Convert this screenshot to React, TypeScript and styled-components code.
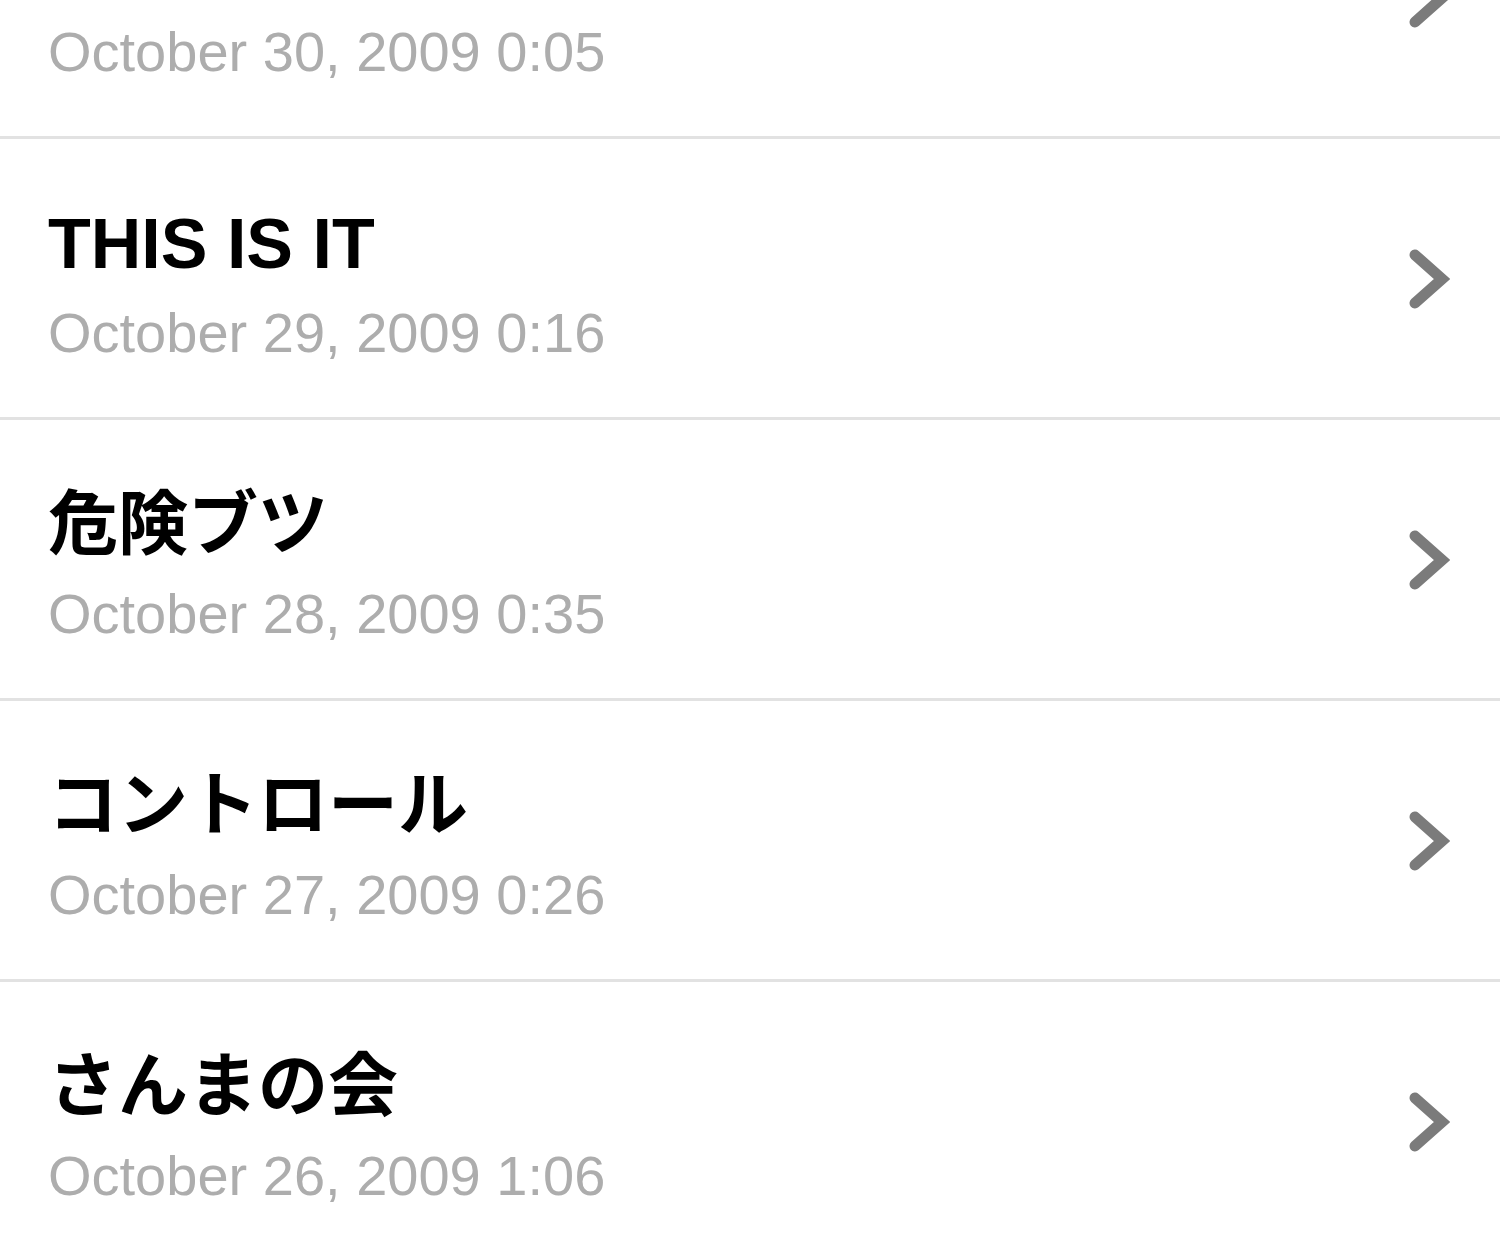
import React from "react";
import styled, { createGlobalStyle } from "styled-components";

const GlobalStyle = createGlobalStyle`
  html, body {
    margin: 0;
    padding: 0;
    background: #ffffff;
  }
  body {
    font-family: "Liberation Sans", Arial, "Noto Sans CJK JP", sans-serif;
  }
`;

const Screen = styled.div`
  width: 1500px;
  height: 1250px;
  overflow: hidden;
  background: #ffffff;
`;

const List = styled.ul`
  list-style: none;
  margin: -142px 0 0 0;
  padding: 0;
`;

const Row = styled.li`
  height: 278px;
  box-sizing: content-box;
  border-bottom: 3px solid #e2e2e2;
  display: flex;
  align-items: flex-start;
  justify-content: space-between;
  padding: 0 50px 0 48px;
`;

const TextBlock = styled.div`
  display: flex;
  flex-direction: column;
  padding-top: 62px;
`;

const Title = styled.div`
  font-family: "Liberation Sans", Arial, "Noto Sans CJK JP", sans-serif;
  font-weight: 700;
  font-size: 70px;
  line-height: 86px;
  color: #000000;
  white-space: nowrap;
`;

const DateText = styled.div`
  font-family: "Liberation Sans", Arial, sans-serif;
  font-weight: 400;
  font-size: 56px;
  line-height: 92px;
  color: #adadad;
  white-space: nowrap;
`;

const ChevronWrap = styled.div`
  align-self: center;
  display: flex;
  width: 44px;
  height: 66px;
`;

const Chevron = () => (
  <ChevronWrap>
    <svg width="44" height="66" viewBox="0 0 44 66">
      <path
        d="M9 10 L36 34 L9 58"
        fill="none"
        stroke="#7b7b7b"
        strokeWidth="11"
        strokeLinecap="round"
        strokeLinejoin="miter"
      />
    </svg>
  </ChevronWrap>
);

const items = [
  { title: "", date: "October 30, 2009 0:05" },
  { title: "THIS IS IT", date: "October 29, 2009 0:16" },
  { title: "危険ブツ", date: "October 28, 2009 0:35" },
  { title: "コントロール", date: "October 27, 2009 0:26" },
  { title: "さんまの会", date: "October 26, 2009 1:06" },
];

export default function App() {
  return (
    <>
      <GlobalStyle />
      <Screen>
        <List>
          {items.map((it) => (
            <Row key={it.date}>
              <TextBlock>
                <Title>{it.title || "\u00a0"}</Title>
                <DateText>{it.date}</DateText>
              </TextBlock>
              <Chevron />
            </Row>
          ))}
        </List>
      </Screen>
    </>
  );
}
